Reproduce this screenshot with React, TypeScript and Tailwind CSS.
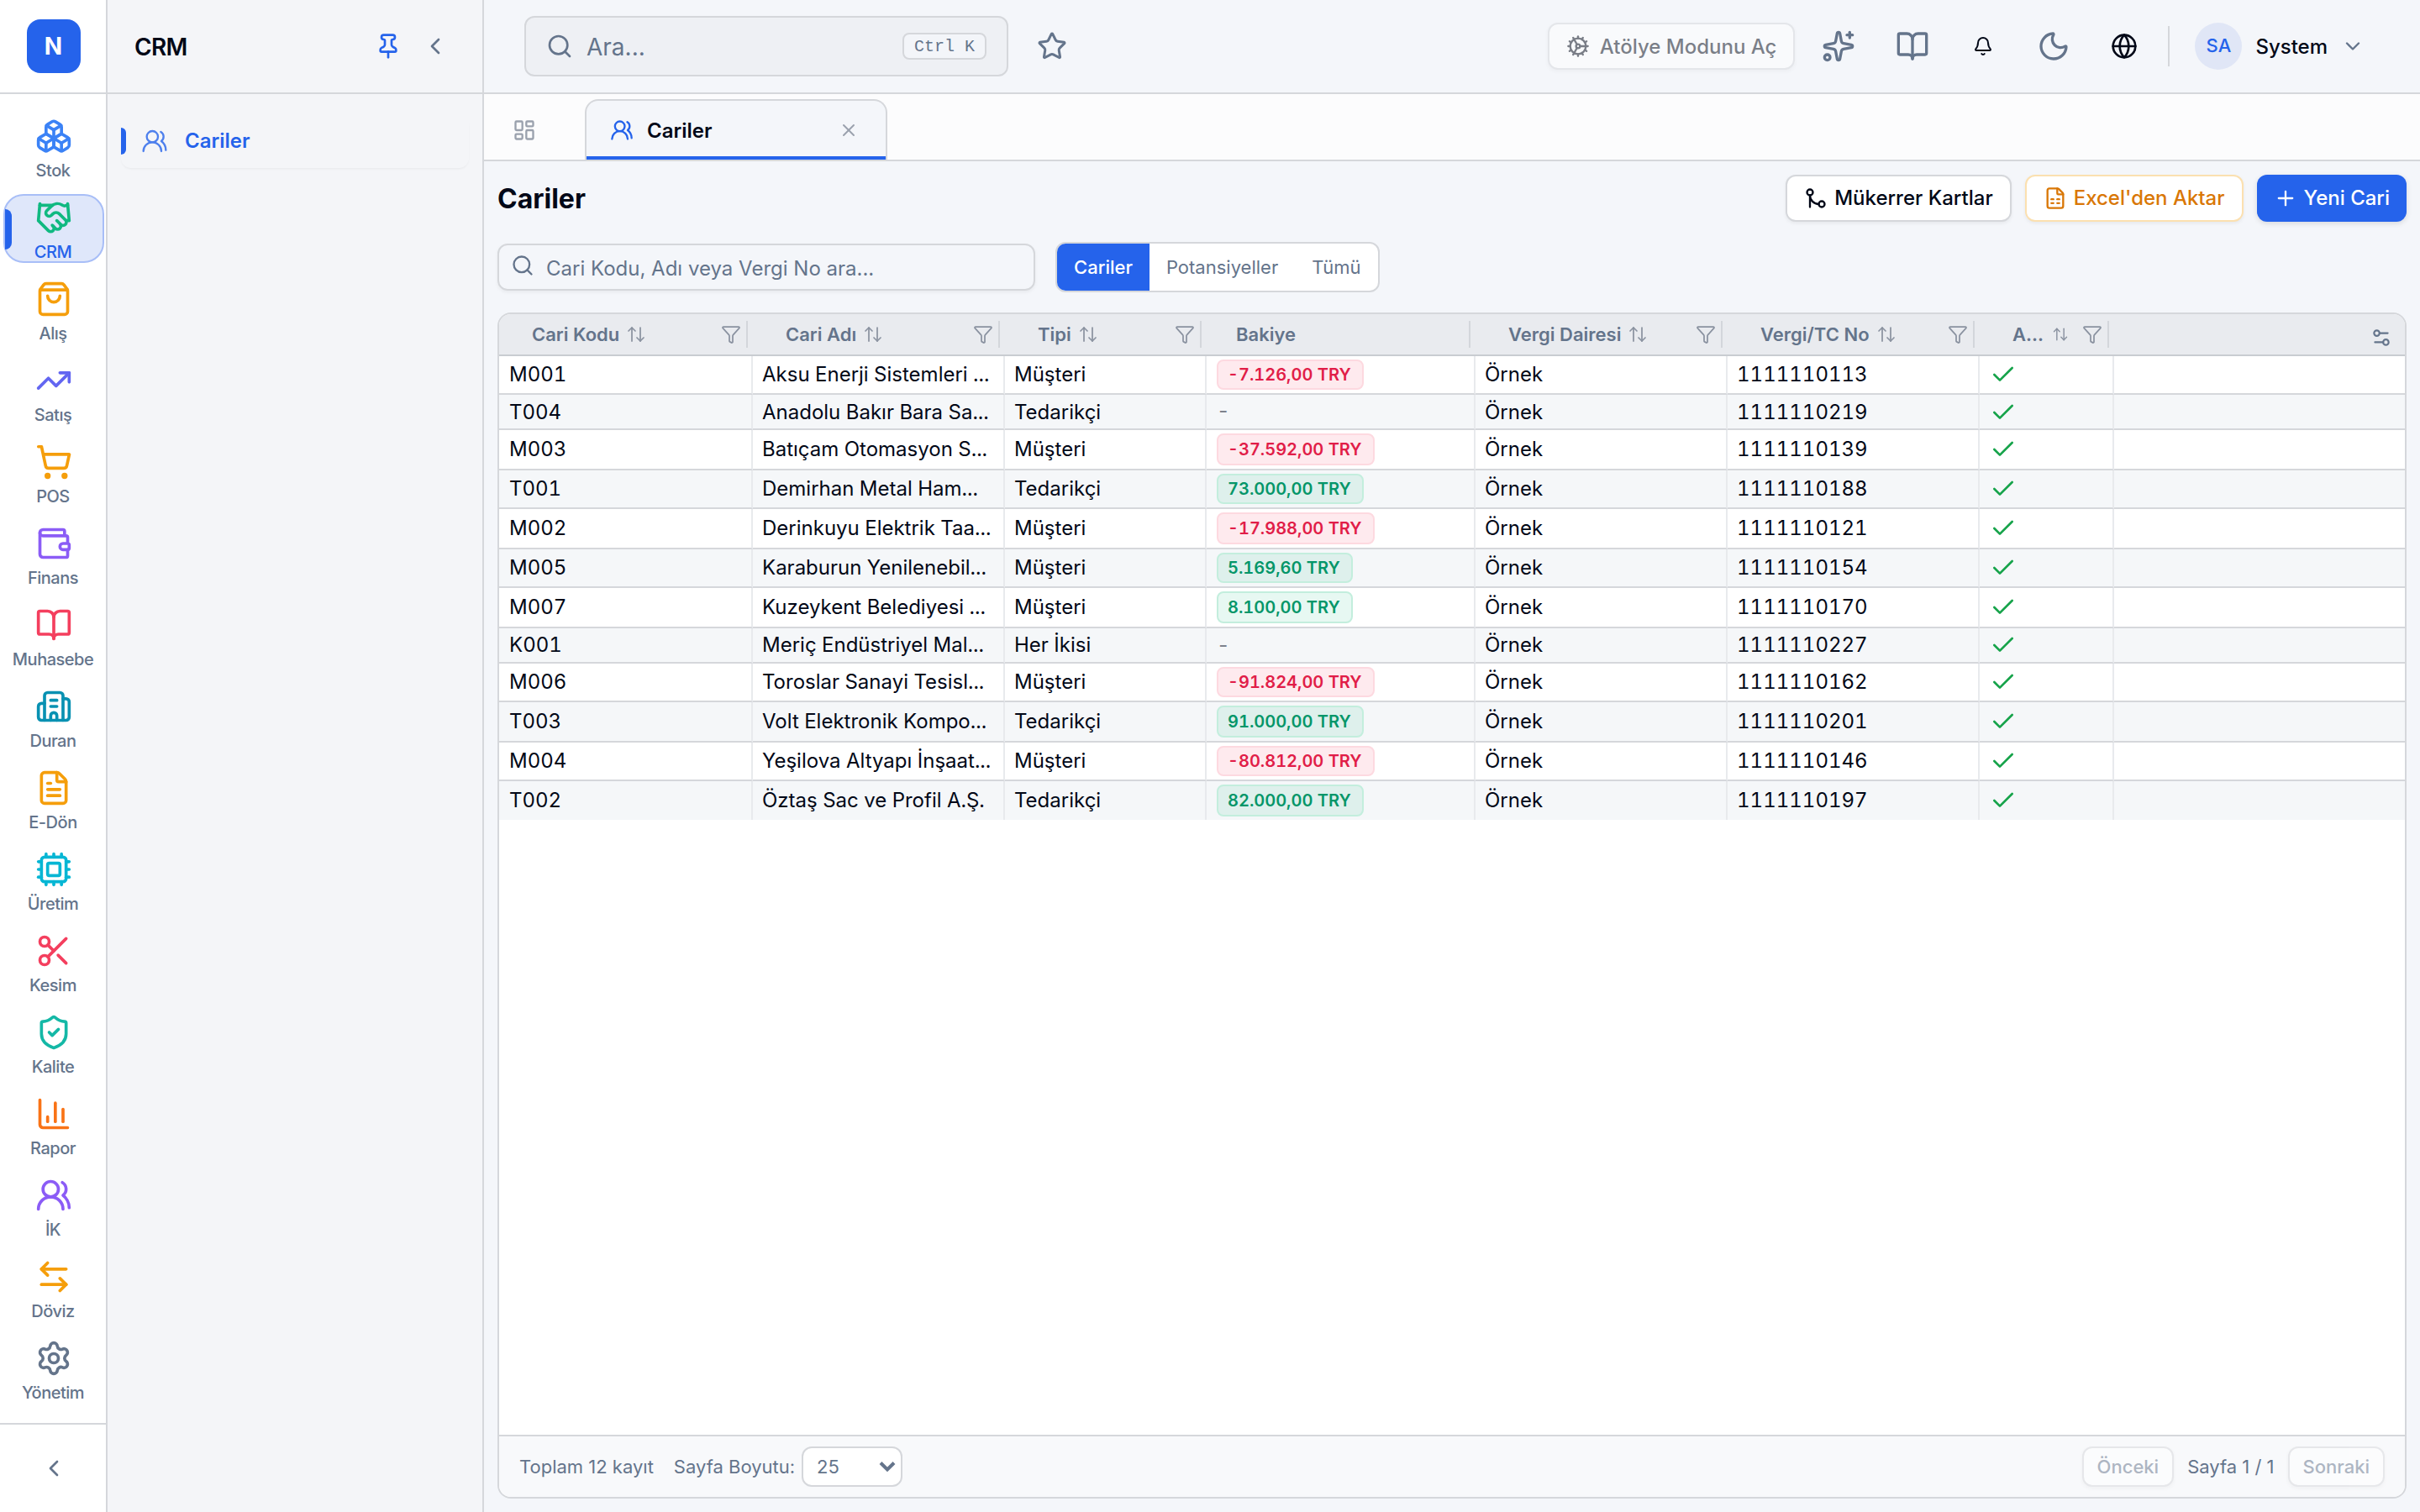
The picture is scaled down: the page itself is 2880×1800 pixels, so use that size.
import type { LucideIcon } from 'lucide-react';
import {
  ArrowLeftRight,
  ArrowUpDown,
  Bell,
  BookOpen,
  Boxes,
  Building2,
  ChartColumn,
  Check,
  ChevronDown,
  ChevronLeft,
  Cog,
  Cpu,
  FileSpreadsheet,
  FileText,
  Funnel,
  GitMerge,
  Globe,
  Handshake,
  LayoutDashboard,
  Moon,
  Pin,
  Plus,
  Scissors,
  Search,
  Settings,
  Settings2,
  ShieldCheck,
  ShoppingBag,
  ShoppingCart,
  Sparkles,
  Star,
  TrendingUp,
  UsersRound,
  Wallet,
  X,
} from 'lucide-react';

interface Module {
  label: string;
  icon: LucideIcon;
  color: string;
}

const MODULES: Module[] = [
  { label: 'Stok', icon: Boxes, color: 'text-[#3b82f6]' },
  { label: 'CRM', icon: Handshake, color: 'text-[#10b981]' },
  { label: 'Alış', icon: ShoppingBag, color: 'text-[#f59e0b]' },
  { label: 'Satış', icon: TrendingUp, color: 'text-[#6366f1]' },
  { label: 'POS', icon: ShoppingCart, color: 'text-[#f59e0b]' },
  { label: 'Finans', icon: Wallet, color: 'text-[#8b5cf6]' },
  { label: 'Muhasebe', icon: BookOpen, color: 'text-[#f43f5e]' },
  { label: 'Duran', icon: Building2, color: 'text-[#0891b2]' },
  { label: 'E-Dön', icon: FileText, color: 'text-[#f59e0b]' },
  { label: 'Üretim', icon: Cpu, color: 'text-[#06b6d4]' },
  { label: 'Kesim', icon: Scissors, color: 'text-[#f43f5e]' },
  { label: 'Kalite', icon: ShieldCheck, color: 'text-[#14b8a6]' },
  { label: 'Rapor', icon: ChartColumn, color: 'text-[#f97316]' },
  { label: 'İK', icon: UsersRound, color: 'text-[#8b5cf6]' },
  { label: 'Döviz', icon: ArrowLeftRight, color: 'text-[#f59e0b]' },
  { label: 'Yönetim', icon: Settings, color: 'text-[#64748b]' },
];

const COLUMNS = [
  { label: 'Cari Kodu', width: 'w-[302px]', sortable: true },
  { label: 'Cari Adı', width: 'w-[300px]', sortable: true },
  { label: 'Tipi', width: 'w-[240px]', sortable: true },
  { label: 'Bakiye', width: 'w-[320px]', sortable: false },
  { label: 'Vergi Dairesi', width: 'w-[300px]', sortable: true },
  { label: 'Vergi/TC No', width: 'w-[300px]', sortable: true },
  { label: 'A...', width: 'w-[160px]', sortable: true },
];

interface Row {
  code: string;
  name: string;
  type: string;
  balance: string;
  taxNo: string;
  height: string;
}

const ROWS: Row[] = [
  { code: 'M001', name: 'Aksu Enerji Sistemleri ...', type: 'Müşteri', balance: '-7.126,00 TRY', taxNo: '1111110113', height: 'h-[46px]' },
  { code: 'T004', name: 'Anadolu Bakır Bara Sa...', type: 'Tedarikçi', balance: '-', taxNo: '1111110219', height: 'h-[42px] [&>div]:pt-0.5' },
  { code: 'M003', name: 'Batıçam Otomasyon S...', type: 'Müşteri', balance: '-37.592,00 TRY', taxNo: '1111110139', height: 'h-[48px]' },
  { code: 'T001', name: 'Demirhan Metal Ham...', type: 'Tedarikçi', balance: '73.000,00 TRY', taxNo: '1111110188', height: 'h-[46px]' },
  { code: 'M002', name: 'Derinkuyu Elektrik Taa...', type: 'Müşteri', balance: '-17.988,00 TRY', taxNo: '1111110121', height: 'h-[48px]' },
  { code: 'M005', name: 'Karaburun Yenilenebil...', type: 'Müşteri', balance: '5.169,60 TRY', taxNo: '1111110154', height: 'h-[46px]' },
  { code: 'M007', name: 'Kuzeykent Belediyesi ...', type: 'Müşteri', balance: '8.100,00 TRY', taxNo: '1111110170', height: 'h-[48px]' },
  { code: 'K001', name: 'Meriç Endüstriyel Mal...', type: 'Her İkisi', balance: '-', taxNo: '1111110227', height: 'h-[42px]' },
  { code: 'M006', name: 'Toroslar Sanayi Tesisl...', type: 'Müşteri', balance: '-91.824,00 TRY', taxNo: '1111110162', height: 'h-[46px]' },
  { code: 'T003', name: 'Volt Elektronik Kompo...', type: 'Tedarikçi', balance: '91.000,00 TRY', taxNo: '1111110201', height: 'h-[48px]' },
  { code: 'M004', name: 'Yeşilova Altyapı İnşaat...', type: 'Müşteri', balance: '-80.812,00 TRY', taxNo: '1111110146', height: 'h-[46px]' },
  { code: 'T002', name: 'Öztaş Sac ve Profil A.Ş.', type: 'Tedarikçi', balance: '82.000,00 TRY', taxNo: '1111110197', height: 'h-[46px]' },
];

function ModuleRail() {
  return (
    <aside className="flex w-32 shrink-0 flex-col border-r-2 border-[#d5d7db] bg-white">
      <div className="flex h-28 shrink-0 items-center border-b-2 border-[#d5d7db] pl-8">
        <div className="flex h-16 w-16 items-center justify-center rounded-2xl bg-[#2563eb] pr-px text-[28px] font-bold text-white">
          N
        </div>
      </div>
      <nav className="flex flex-1 flex-col justify-between pt-[22px] pb-[23px] pl-1">
        {MODULES.map((item) => {
          const active = item.label === 'CRM';
          const Icon = item.icon;
          return (
            <div
              key={item.label}
              className={`relative flex h-[82px] w-[120px] flex-col items-center rounded-3xl border-2 pt-1 ${
                active ? 'border-[#a8bef7] bg-[#dfe7fa]' : 'border-transparent'
              }`}
            >
              {active && <span className="absolute top-4 left-0 h-12 w-2 rounded-r-lg bg-[#2563eb]" />}
              <Icon className={`h-11 w-11 shrink-0 ${item.color}`} />
              <span
                className={`mt-1.5 pr-0.5 text-[20px] leading-[26px] font-medium tracking-tight ${
                  active ? 'text-[#2563eb]' : 'text-[#64748b]'
                }`}
              >
                {item.label}
              </span>
            </div>
          );
        })}
      </nav>
      <div className="flex h-[106px] shrink-0 items-center justify-center border-t-2 border-[#d5d7db] pl-[2px] text-[#64748b]">
        <ChevronLeft className="h-8 w-8" />
      </div>
    </aside>
  );
}

function SidePanel() {
  return (
    <aside className="flex w-[448px] shrink-0 flex-col border-r-2 border-[#d5d7db] bg-[#f4f5f8]">
      <div className="flex h-28 shrink-0 items-center border-b-2 border-[#d5d7db] pr-10 pl-8">
        <span className="flex-1 pt-0.5 text-[28px] font-semibold tracking-tight">CRM</span>
        <Pin className="mr-6 h-8 w-8 text-[#2563eb]" />
        <ChevronLeft className="h-8 w-8 text-[#64748b]" />
      </div>
      <div className="px-4 pt-6">
        <div className="flex h-16 items-center rounded-xl text-[#2563eb] shadow-[0_2px_3px_-1px_rgba(0,0,0,0.06)]">
          <span className="h-8 w-1.5 rounded-r-lg bg-[#2563eb]" />
          <UsersRound className="ml-[18px] h-8 w-8 opacity-80" strokeWidth={1.75} />
          <span className="ml-5 text-[24px] font-semibold">Cariler</span>
        </div>
      </div>
    </aside>
  );
}

function TopBar() {
  return (
    <header className="flex h-28 shrink-0 items-center border-b-2 border-[#d5d7db] pr-[66px] pl-12">
      <div className="flex h-[72px] w-[576px] items-center rounded-xl border-2 border-[#d5d7db] bg-[#eef0f4] px-6 text-[#64748b]">
        <Search className="h-8 w-8" />
        <span className="ml-4 flex-1 pt-0.5 text-[28px]">Ara...</span>
        <kbd className="flex h-8 items-center rounded-lg border-2 border-[#d5d7db] bg-[#f3f5f9] px-3 pt-0.5 font-['Liberation_Mono',monospace] text-[20px]">
          Ctrl K
        </kbd>
      </div>
      <Star className="ml-[34px] h-9 w-9 text-[#64748b]" />

      <div className="ml-auto flex items-center">
        <button className="flex h-14 items-center gap-3 rounded-xl border-2 border-[#d5d7db] bg-white px-5 text-[24px] font-medium opacity-50 shadow-[0_2px_4px_rgba(0,0,0,0.06)]">
          <Cog className="h-7 w-7" />
          <span className="pt-px">Atölye Modunu Aç</span>
        </button>
        <Sparkles className="ml-8 h-10 w-10 text-[#64748b]" />
        <BookOpen className="ml-12 h-10 w-10 text-[#64748b]" />
        <Bell className="ml-[52px] h-6 w-6" />
        <Moon className="ml-[52px] h-10 w-10 text-[#64748b]" />
        <Globe className="ml-12 h-8 w-8" />
        <div className="ml-9 h-12 w-0.5 bg-[#d5d7db]" />
        <div className="ml-[30px] flex h-14 w-14 items-center justify-center rounded-full bg-[#e0e6f6] pb-px text-[22px] font-medium text-[#2563eb]">
          SA
        </div>
        <span className="ml-4 pt-px text-[24px] font-medium">System</span>
        <ChevronDown className="ml-4 h-7 w-7 text-[#64748b]" />
      </div>
    </header>
  );
}

function TabStrip() {
  return (
    <div className="flex h-20 shrink-0 border-b-2 border-[#d5d7db] bg-[#fcfcfd] pt-1.5">
      <div className="flex w-[120px] items-center pt-0.5 pl-[34px]">
        <LayoutDashboard className="h-7 w-7 text-[#9aa1ad]" />
      </div>
      <div className="relative flex w-[360px] items-center rounded-t-2xl border-2 border-b-0 border-[#d5d7db] bg-[#f4f6fa] pr-8 pl-7">
        <UsersRound className="h-7 w-7 text-[#2563eb]" />
        <span className="ml-4 flex-1 pt-px text-[24px] font-semibold">Cariler</span>
        <X className="h-6 w-6 text-[#9aa1ad]" />
        <span className="absolute bottom-0 left-0 h-1 w-full bg-[#2563eb]" />
      </div>
    </div>
  );
}

function Balance({ value }: { value: string }) {
  if (value === '-') {
    return <span className="text-[24px] text-[#7d828c]">-</span>;
  }
  return (
    <span
      className={`flex h-full items-center rounded-lg border-2 pr-[13px] pl-[11px] text-[20px] font-semibold ${
        value.startsWith('-')
          ? 'border-[#fdd9e0] bg-[#feeaee] text-[#e11d48]'
          : 'border-[#c3eedd] bg-[#10b981]/10 text-[#059669]'
      }`}
    >
      {value}
    </span>
  );
}

function CustomersTable() {
  return (
    <section className="mt-6 flex flex-1 flex-col overflow-hidden rounded-2xl border-2 border-[#d5d7db] bg-white">
      <div className="flex h-[50px] shrink-0 border-b-2 border-[#c9ccd1] bg-[#e9ebef] text-[22px] font-semibold text-[#64748b]">
        {COLUMNS.map((col) => (
          <div
            key={col.label}
            className={`flex shrink-0 items-center pr-1.5 ${col.sortable ? 'pl-[39px]' : 'pl-[35px]'} ${col.width}`}
          >
            <span>{col.label}</span>
            {col.sortable && (
              <>
                <ArrowUpDown
                  className={`shrink-0 text-[#8b93a1] ${col.label === 'A...' ? 'ml-2.5 h-5 w-5' : 'ml-2 h-6 w-6'}`}
                  strokeWidth={1.75}
                />
                <Funnel className="ml-auto h-6 w-6 shrink-0 text-[#8a92a0]" strokeWidth={1.75} />
              </>
            )}
            <span className={`h-8 w-0.5 shrink-0 bg-[#d3d6db] ${col.sortable ? 'ml-1.5' : 'ml-auto'}`} />
          </div>
        ))}
        <div className="flex flex-1 items-center justify-end pt-2 pr-[15px]">
          <Settings2 className="h-[26px] w-[26px]" />
        </div>
      </div>

      <div className="flex-1 text-[24px] tabular-nums">
        {ROWS.map((row, i) => (
          <div
            key={row.code}
            className={`flex ${row.height} ${i % 2 ? 'bg-[#f5f7f9]' : 'bg-white'} [&>div]:border-b-2 [&>div]:border-b-[#d5d7db] last:[&>div]:border-b-0`}
          >
            <div className="flex w-[302px] items-center border-r-2 border-r-[#e8eaed] px-3">{row.code}</div>
            <div className="flex w-[300px] items-center border-r-2 border-r-[#e8eaed] pl-[11px] whitespace-nowrap">{row.name}</div>
            <div className="flex w-[240px] items-center border-r-2 border-r-[#e8eaed] pl-[11px]">{row.type}</div>
            <div className="flex w-[320px] items-center border-r-2 border-r-[#e8eaed] px-3 py-1">
              <Balance value={row.balance} />
            </div>
            <div className="flex w-[300px] items-center border-r-2 border-r-[#e8eaed] pl-[11px]">Örnek</div>
            <div className="flex w-[300px] items-center border-r-2 border-r-[#e8eaed] pl-[11px]">{row.taxNo}</div>
            <div className="flex w-[160px] items-center border-r-2 border-r-[#e8eaed] px-3">
              <Check className="h-8 w-8 text-[#16a34a]" />
            </div>
            <div className="flex-1" />
          </div>
        ))}
      </div>

      <footer className="flex h-[74px] shrink-0 items-center border-t-2 border-[#d5d7db] bg-[#f8f9fb] px-6 text-[22px] text-[#64748b]">
        <span>Toplam 12 kayıt</span>
        <span className="ml-6">Sayfa Boyutu:</span>
        <div className="ml-2 flex h-12 w-[120px] items-center justify-between rounded-xl border-2 border-[#d5d7db] bg-white pr-1.5 pl-4">
          25
          <svg className="h-[14px] w-5" viewBox="0 0 20 14" fill="none" stroke="currentColor" strokeWidth={4}>
            <path d="M2 2.5l8 8 8-8" />
          </svg>
        </div>
        <div className="ml-auto flex items-center gap-4">
          <button className="h-12 rounded-xl border-2 border-[#d5d7db] bg-white px-4 font-medium opacity-50 shadow-[0_2px_4px_rgba(0,0,0,0.06)]">
            Önceki
          </button>
          <span>Sayfa 1 / 1</span>
          <button className="h-12 rounded-xl border-2 border-[#d5d7db] bg-white px-4 font-medium opacity-50 shadow-[0_2px_4px_rgba(0,0,0,0.06)]">
            Sonraki
          </button>
        </div>
      </footer>
    </section>
  );
}

function CustomersPage() {
  return (
    <main className="flex flex-1 flex-col p-4">
      <div className="flex h-14 items-center gap-4 text-[24px] font-medium">
        <h1 className="flex-1 pt-0.5 text-[32px] font-bold">Cariler</h1>
        <button className="flex h-14 items-center gap-2 rounded-xl border-2 border-[#d5d7db] bg-white px-5 shadow-[0_2px_4px_rgba(0,0,0,0.06)]">
          <GitMerge className="h-7 w-7" />
          Mükerrer Kartlar
        </button>
        <button className="flex h-14 items-center gap-2 rounded-xl border-2 border-[#fbe0b0] bg-white px-5 text-[#d97706] shadow-[0_2px_4px_rgba(0,0,0,0.06)]">
          <FileSpreadsheet className="h-7 w-7" />
          Excel'den Aktar
        </button>
        <button className="flex h-14 items-center gap-2 rounded-xl bg-[#2563eb] px-5 text-white shadow-[0_2px_6px_rgba(0,0,0,0.12)]">
          <Plus className="h-7 w-7" />
          Yeni Cari
        </button>
      </div>

      <div className="mt-6 flex h-[60px] items-center">
        <div className="flex h-14 w-[640px] items-center rounded-xl border-2 border-[#d5d7db] px-3.5 text-[#64748b] shadow-[0_2px_4px_rgba(0,0,0,0.05)]">
          <Search className="mb-1 h-7 w-7" />
          <span className="ml-3.5 pt-[3px] text-[24px]">Cari Kodu, Adı veya Vergi No ara...</span>
        </div>
        <div className="ml-6 flex h-[60px] items-stretch overflow-hidden rounded-xl border-2 border-[#d5d7db] bg-white text-[22px] text-[#64748b]">
          <button className="bg-[#2563eb] px-5 font-medium text-white">Cariler</button>
          <button className="px-5">Potansiyeller</button>
          <button className="px-5">Tümü</button>
        </div>
      </div>

      <CustomersTable />
    </main>
  );
}

export default function App() {
  return (
    <div className="flex h-[1800px] w-[2880px] overflow-hidden bg-[#f4f6fa] font-['Inter',sans-serif] text-[#020817]">
      <ModuleRail />
      <SidePanel />
      <div className="flex flex-1 flex-col">
        <TopBar />
        <TabStrip />
        <CustomersPage />
      </div>
    </div>
  );
}
